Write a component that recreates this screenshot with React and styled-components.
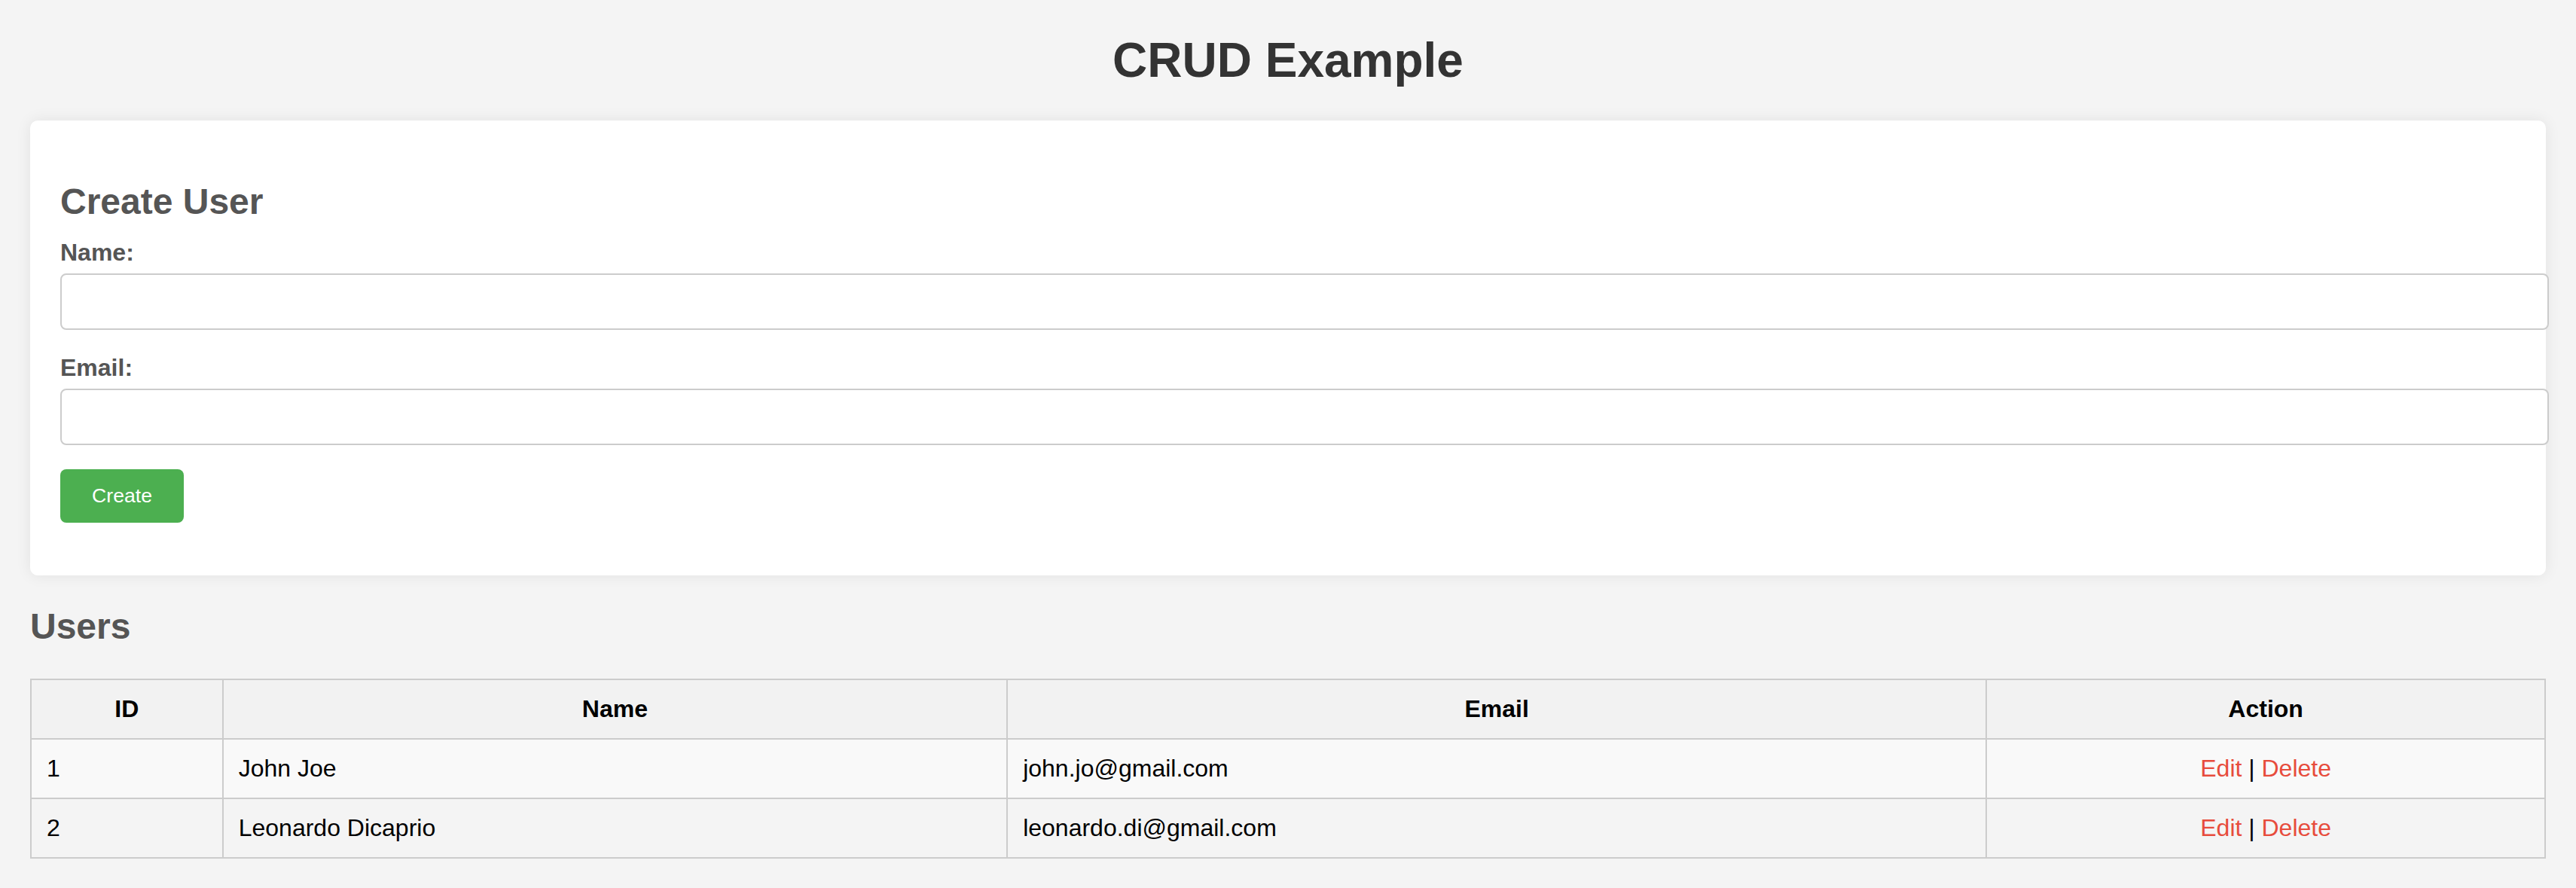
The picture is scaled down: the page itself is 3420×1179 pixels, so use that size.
import React from 'react'
import styled, { createGlobalStyle } from 'styled-components'

const users = [
  { id: 1, name: 'John Joe', email: 'john.jo@gmail.com' },
  { id: 2, name: 'Leonardo Dicaprio', email: 'leonardo.di@gmail.com' },
]

export default function App() {
  return (
    <>
      <GlobalStyle />
      <Page>
        <Title>CRUD Example</Title>
        <Card>
          <SectionTitle top={40} bottom={22}>
            Create User
          </SectionTitle>
          <form onSubmit={e => e.preventDefault()}>
            <FormGroup>
              <Label htmlFor="name">Name:</Label>
              <Input id="name" type="text" />
            </FormGroup>
            <FormGroup>
              <Label htmlFor="email">Email:</Label>
              <Input id="email" type="email" />
            </FormGroup>
            <CreateButton type="submit">Create</CreateButton>
          </form>
        </Card>

        <SectionTitle top={40} bottom={42}>
          Users
        </SectionTitle>
        <Table>
          <colgroup>
            <col style={{ width: '7.63%' }} />
            <col style={{ width: '31.2%' }} />
            <col style={{ width: '38.95%' }} />
            <col style={{ width: '22.22%' }} />
          </colgroup>
          <tbody>
            <tr>
              <Th>ID</Th>
              <Th>Name</Th>
              <Th>Email</Th>
              <Th>Action</Th>
            </tr>
            {users.map(user => (
              <Row key={user.id}>
                <Td>{user.id}</Td>
                <Td>{user.name}</Td>
                <Td>{user.email}</Td>
                <Td center>
                  <ActionLink>Edit</ActionLink> | <ActionLink>Delete</ActionLink>
                </Td>
              </Row>
            ))}
          </tbody>
        </Table>
      </Page>
    </>
  )
}

const GlobalStyle = createGlobalStyle`
  html, body {
    margin: 0;
    padding: 0;
    background: #f4f4f4;
    font-family: 'Liberation Sans', Arial, Helvetica, sans-serif;
  }
`

const Page = styled.div`
  padding: 0 40px 40px;
  min-height: 1179px;
  box-sizing: border-box;
`

const Title = styled.h1`
  margin: 43px 0;
  font-size: 64px;
  font-weight: bold;
  color: #333;
  text-align: center;
`

const Card = styled.div`
  background: #fff;
  border-radius: 10px;
  padding: 40px 40px 70px;
  box-shadow: 0 0 20px rgba(0, 0, 0, 0.08);
`

const SectionTitle = styled.h2`
  margin: ${props => props.top}px 0 ${props => props.bottom}px;
  font-size: 48px;
  font-weight: bold;
  color: #555;
`

const FormGroup = styled.div`
  margin-bottom: 32px;
`

const Label = styled.label`
  display: block;
  margin-bottom: 9px;
  font-size: 32px;
  font-weight: bold;
  color: #555;
`

const Input = styled.input`
  display: block;
  width: 100%;
  height: 31px;
  padding: 20px;
  border: 2px solid #ccc;
  border-radius: 8px;
  font-size: 26.67px;
  font-family: inherit;
  background: #fff;
  outline: none;
`

const CreateButton = styled.button`
  display: block;
  padding: 20px 42px;
  border: none;
  border-radius: 8px;
  background: #4caf50;
  color: #fff;
  font-family: inherit;
  font-size: 26.67px;
  line-height: 31px;
  cursor: pointer;
`

const Table = styled.table`
  width: 100%;
  table-layout: fixed;
  border-collapse: collapse;
  font-size: 32px;
  color: #000;
`

const Th = styled.th`
  padding: 20px;
  border: 2px solid #ccc;
  background: #f2f2f2;
  font-weight: bold;
  text-align: center;
`

const Row = styled.tr`
  &:nth-child(even) {
    background: #f9f9f9;
  }
`

const Td = styled.td`
  padding: 20px;
  border: 2px solid #ccc;
  text-align: ${props => (props.center ? 'center' : 'left')};
`

const ActionLink = styled.a`
  color: #e74c3c;
  cursor: pointer;
  text-decoration: none;
`
